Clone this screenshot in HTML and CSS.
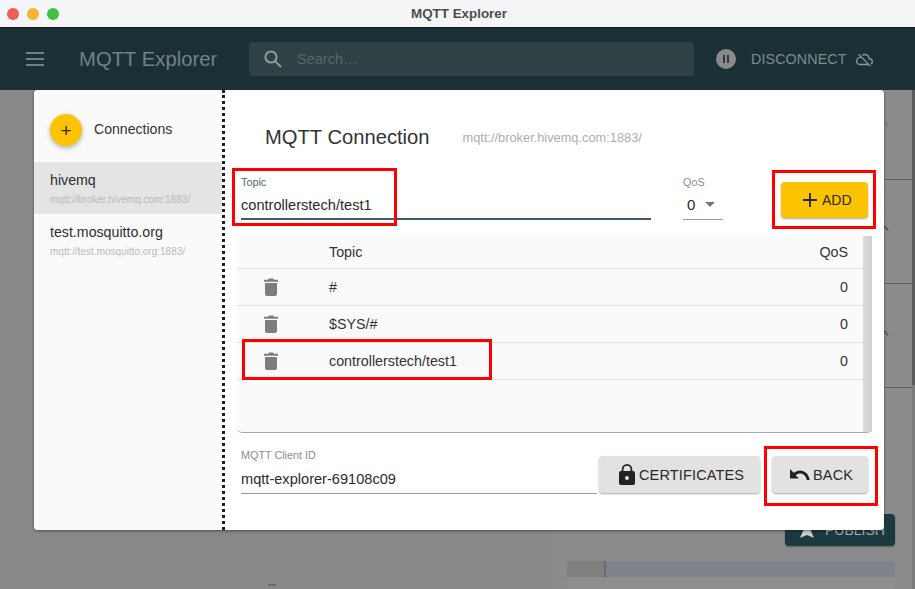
FILE: index.html
```html
<!DOCTYPE html>
<html lang="en">
<head>
<meta charset="utf-8">
<title>MQTT Explorer</title>
<link rel="stylesheet" href="styles.css">
</head>
<body>
<div class="window">
  <header class="titlebar">
    <div class="lights"><span class="light red"></span><span class="light amber"></span><span class="light green"></span></div>
    <div class="window-title">MQTT Explorer</div>
  </header>
  <div class="appbar">
    <svg class="menu-icon" viewBox="0 0 18 14"><path d="M0 1h18M0 7h18M0 13h18"/></svg>
    <div class="app-title">MQTT Explorer</div>
    <div class="search">
      <svg class="search-icon" viewBox="0 0 18 18"><circle cx="7" cy="7" r="5.6"/><path d="M11 11l6 6"/></svg>
      <span class="search-text">Search…</span>
    </div>
    <div class="pause"><i></i><i></i></div>
    <div class="disconnect">DISCONNECT</div>
    <svg class="cloud-icon" viewBox="0 0 24 24"><path d="M19.35 10.04A7.49 7.49 0 0 0 12 4c-1.48 0-2.85.43-4.01 1.17l1.46 1.46A5.47 5.47 0 0 1 12 6a5.5 5.5 0 0 1 5.5 5.5v.5H19a3 3 0 0 1 3 3c0 1.13-.64 2.11-1.56 2.62l1.45 1.45A4.99 4.99 0 0 0 24 15c0-2.64-2.05-4.78-4.65-4.96zM3 5.27l2.75 2.74C2.56 8.15 0 10.77 0 14a6 6 0 0 0 6 6h11.73l2 2L21 20.73 4.27 4 3 5.27zM7.730 10l8 8H6a4 4 0 0 1 0-8h1.730z"/></svg>
  </div>
  <div class="stage">
    <div class="backdrop">
      <div class="tree"><span class="handle">•••</span></div>
      <aside class="sidepanel">
        <div class="rule r1"></div>
        <div class="rule r2"></div>
        <div class="rule r3"></div>
        <div class="tick t1"></div>
        <div class="tick t2"></div>
        <div class="tick t3"></div>
        <button class="publish"><svg class="publish-icon" viewBox="0 0 16 16"><path d="M8 0l7 16-7-3-7 3z"/></svg>PUBLISH</button>
        <div class="history"><span class="history-a"></span><span class="history-b"></span></div>
        <div class="history-foot"></div>
      </aside>
      <div class="edge"></div>
    </div>

    <section class="modal">
      <nav class="sidebar">
        <div class="conn-head">
          <div class="fab">+</div>
          <div class="conn-title">Connections</div>
        </div>
        <div class="conn selected">
          <div class="conn-name">hivemq</div>
          <div class="conn-url">mqtt://broker.hivemq.com:1883/</div>
        </div>
        <div class="conn">
          <div class="conn-name">test.mosquitto.org</div>
          <div class="conn-url">mqtt://test.mosquitto.org:1883/</div>
        </div>
      </nav>
      <main class="main">
        <div class="heading">
          <h1>MQTT Connection</h1>
          <span class="heading-url">mqtt://broker.hivemq.com:1883/</span>
        </div>
        <div class="topic-row">
          <div class="field topic-field">
            <label class="label label-focus">Topic</label>
            <div class="value">controllerstech/test1</div>
          </div>
          <div class="field qos-field">
            <label class="label">QoS</label>
            <div class="value qos-value">0<span class="caret"></span></div>
          </div>
          <button class="btn btn-add">
            <svg class="plus-icon" viewBox="0 0 16 16"><path d="M8 1v14M1 8h14"/></svg>ADD
          </button>
        </div>
        <div class="table-wrap">
          <div class="table">
            <div class="tr th"><span></span><span>Topic</span><span class="num">QoS</span></div>
            <div class="tr">
              <svg class="trash" viewBox="0 0 14 18"><path d="M0 1.8h4L5 .6h4l1 1.2h4v2H0zM1 5h12v11a2 2 0 0 1-2 2H3a2 2 0 0 1-2-2z"/></svg>
              <span>#</span><span class="num">0</span>
            </div>
            <div class="tr">
              <svg class="trash" viewBox="0 0 14 18"><path d="M0 1.8h4L5 .6h4l1 1.2h4v2H0zM1 5h12v11a2 2 0 0 1-2 2H3a2 2 0 0 1-2-2z"/></svg>
              <span>$SYS/#</span><span class="num">0</span>
            </div>
            <div class="tr">
              <svg class="trash" viewBox="0 0 14 18"><path d="M0 1.8h4L5 .6h4l1 1.2h4v2H0zM1 5h12v11a2 2 0 0 1-2 2H3a2 2 0 0 1-2-2z"/></svg>
              <span>controllerstech/test1</span><span class="num">0</span>
            </div>
          </div>
          <div class="scrollbar"></div>
        </div>
        <div class="footer">
          <div class="field client-field">
            <label class="label">MQTT Client ID</label>
            <div class="value">mqtt-explorer-69108c09</div>
          </div>
          <button class="btn btn-cert">
            <svg class="lock-icon" viewBox="0 0 16 21"><path fill-rule="evenodd" d="M8 0a5.3 5.3 0 0 1 5.3 5.3V7H14a2 2 0 0 1 2 2v10a2 2 0 0 1-2 2H2a2 2 0 0 1-2-2V9a2 2 0 0 1 2-2h.7V5.3A5.3 5.3 0 0 1 8 0zm0 1.8a3.5 3.5 0 0 0-3.5 3.5V7h7V5.3A3.5 3.5 0 0 0 8 1.8zM8 12a2 2 0 1 0 0 4 2 2 0 0 0 0-4z"/></svg>CERTIFICATES
          </button>
          <button class="btn btn-back">
            <svg class="undo-icon" viewBox="0 0 20 11"><path d="M0 0v9.5h9L5.6 6.2C7 5 8.600 4.400 10.200 4.400c3 0 5.600 2 6.600 6.600h3C18.600 4.800 14.800 1.400 10.200 1.400 7.800 1.400 5.500 2.300 3.700 3.800z"/></svg>BACK
          </button>
        </div>
      </main>
    </section>

    <div class="mark mark-topic"></div>
    <div class="mark mark-add"></div>
    <div class="mark mark-row"></div>
    <div class="mark mark-back"></div>
  </div>
</div>
</body>
</html>
```

FILE: styles.css
```css
* { box-sizing: border-box; }
html, body { margin: 0; height: 100%; overflow: hidden; }
body { font-family: "Liberation Sans", Arial, sans-serif; color: #2b2b2b; }

.window { width: 915px; height: 589px; display: flex; flex-direction: column; background: #888; }

.titlebar { height: 28px; flex: none; background: #f4f5f6; border-bottom: 1px solid #1a1a1a; display: flex; align-items: center; position: relative; }
.lights { display: flex; gap: 8px; padding-left: 7px; }
.light { width: 12px; height: 12px; border-radius: 50%; }
.red { background: #f25d55; }
.amber { background: #f9b232; }
.green { background: #3ec244; }
.window-title { flex: 1; text-align: center; margin-right: 56px; font-size: 13.400px; font-weight: 700; color: #4d4d4d; }

.appbar { height: 62px; flex: none; background: #1b3036; display: flex; align-items: center; padding-left: 26px; color: #778a8f; }
.menu-icon { width: 18px; height: 14px; stroke: #8d9a9d; stroke-width: 1.600; fill: none; flex: none; }
.app-title { font-size: 20.300px; margin-left: 35px; width: 170px; color: #6f8287; }
.search { width: 445px; height: 34px; background: #2e4145; border-radius: 4px; display: flex; align-items: center; padding-left: 15px; }
.search-icon { width: 18px; height: 18px; stroke: #8f9b9e; stroke-width: 2; fill: none; }
.search-text { margin-left: 15px; font-size: 14.500px; color: #55676b; }
.pause { width: 20px; height: 20px; border-radius: 50%; background: #8a8a8a; margin-left: 22px; display: flex; align-items: center; justify-content: center; gap: 2px; }
.pause i { width: 2px; height: 8px; background: #2c3c40; }
.disconnect { margin-left: 15px; font-size: 14.300px; letter-spacing: .1px; color: #7b8b8f; }
.cloud-icon { width: 17px; height: 17px; margin-left: 9px; fill: #8a9699; }

.stage { flex: 1; position: relative; overflow: hidden; }
.backdrop { height: 100%; display: flex; background: #888; }
.tree { width: 552px; display: flex; align-items: flex-end; padding-left: 268px; }
.handle { font-size: 8px; color: #5e5e5e; line-height: 8px; }
.sidepanel { flex: 1; background: #8b8b8b; display: flex; flex-direction: column; align-items: flex-end; padding: 424px 0 0 15px; position: relative; }
.rule { position: absolute; right: 0; width: 27px; height: 1px; background: #5d5d5d; }
.r1 { top: 89px; }
.r2 { top: 193px; }
.r3 { top: 297px; }
.tick { position: absolute; left: 331px; width: 6px; height: 1.500px; background: #5a5a5a; transform: rotate(45deg); }
.t1 { top: 33px; background: #777; }
.t2 { top: 137px; }
.t3 { top: 242px; }
.publish { width: 110px; height: 32px; margin: 0 17px 0 0; border: 0; border-radius: 4px; background: #1b3a3f; color: #aab; display: flex; align-items: center; padding-left: 14px; gap: 10px; font: 14px "Liberation Sans", Arial, sans-serif; box-shadow: 0 1px 2px rgba(0,0,0,.3); flex: none; }
.publish-icon { width: 16px; height: 16px; fill: #c9cdce; }
.history { width: 328px; height: 16px; margin: 15px 17px 0 0; background: #7f8288; display: flex; flex: none; }
.history-a { width: 37px; background: #7f7f7f; }
.history-b { width: 2px; background: #666a6e; }
.history-foot { width: 328px; height: 12px; margin-right: 17px; background: #8e8e8e; flex: none; }
.edge { width: 3px; background: linear-gradient(#5c5c5c 295px, #7c7c7c 295px); }

.modal { position: absolute; left: 34px; top: 0; width: 850px; height: 440px; display: flex; background: #fff; border-radius: 4px; box-shadow: 0 1px 3px rgba(0,0,0,.45); overflow: hidden; }
.sidebar { width: 188px; background: #fafafa; flex: none; }
.conn-head { height: 72px; display: flex; align-items: center; padding: 8px 0 0 16px; }
.fab { width: 32px; height: 32px; border-radius: 50%; background: #fcc400; box-shadow: 0 2px 5px rgba(0,0,0,.3); display: flex; align-items: center; justify-content: center; font-size: 19px; line-height: 1; color: #3a2a00; }
.conn-title { margin: 0 0 2px 12px; font-size: 14.100px; color: #333; }
.conn { height: 52px; padding: 9px 0 0 16px; }
.selected { background: #e4e4e4; }
.conn-name { font-size: 14.200px; line-height: 18px; color: #2e2e2e; }
.conn-url { margin-top: 4px; font-size: 10px; line-height: 13px; color: #b9b9b9; white-space: nowrap; }

.main { flex: 1; border-left: 3px dotted #1f1f1f; padding: 0 12px 0 12px; display: flex; flex-direction: column; }
.heading { height: 82px; display: flex; align-items: center; padding: 12px 0 0 28px; flex: none; }
h1 { margin: 0; font-size: 20.200px; font-weight: 400; color: #333; }
.heading-url { margin-left: 33px; font-size: 12.800px; color: #aeaeae; }

.topic-row { height: 64px; display: flex; flex: none; padding: 4px 0 0 4px; }
.field { display: flex; flex-direction: column; }
.label { font-size: 10.800px; line-height: 12px; color: #8c8c8c; }
.label-focus { color: #4a6a73; }
.value { font-size: 14.600px; line-height: 20px; margin-top: 7px; color: #2b2b2b; border-bottom: 1px solid #9a9a9a; height: 25px; }
.topic-field { width: 410px; }
.topic-field .value { border-bottom: 2px solid #3f5d66; }
.qos-field { width: 40px; margin-left: 32px; }
.qos-value { display: flex; align-items: flex-start; padding-left: 4px; font-size: 15px; }
.caret { margin: 7px 0 0 10px; width: 0; height: 0; border: 5.500px solid transparent; border-top: 5px solid #777; border-bottom: 0; }
.btn { border: 0; border-radius: 4px; display: flex; align-items: center; font: 14.500px "Liberation Sans", Arial, sans-serif; letter-spacing: .15px; color: #2a2a2a; box-shadow: 0 1px 2px rgba(0,0,0,.35); }
.btn-add { width: 87px; height: 36px; margin: 6px 0 0 58px; padding: 0 0 0 21px; background: #fcc400; font-size: 14px; letter-spacing: 0; }
.plus-icon { width: 16px; height: 16px; stroke: #222; stroke-width: 1.800; margin-right: 4px; }

.table-wrap { height: 197px; flex: none; display: flex; background: #fafafa; border-bottom: 1px solid #aaa; border-radius: 0 0 5px 5px; }
.table { flex: 1; }
.scrollbar { width: 9px; background: linear-gradient(90deg, #dadada, #cfcfcf); }
.tr { height: 37px; display: grid; grid-template-columns: 92px 1fr 60px; align-items: center; border-bottom: 1px solid #e2e2e2; font-size: 14.300px; color: #333; }
.th { height: 33px; font-size: 14.300px; }
.trash { width: 14px; height: 18px; fill: #7d7d7d; margin-left: 27px; }
.num { text-align: right; padding-right: 15px; }

.footer { flex: 1; display: flex; padding: 16px 0 0 4px; }
.client-field { width: 356px; }
.client-field .value { height: 27px; margin-top: 6px; padding-top: 2px; }
.btn-cert { width: 161px; height: 37px; margin: 7px 0 0 2px; padding-left: 20px; background: #e2e2e2; }
.lock-icon { width: 16px; height: 21px; fill: #222; margin-right: 4px; }
.btn-back { width: 96px; height: 37px; margin: 7px 0 0 12px; padding-left: 18px; background: #e2e2e2; }
.undo-icon { width: 20px; height: 11px; fill: #222; margin-right: 3px; }

.mark { position: absolute; border: 3px solid #f00; }
.mark-topic { left: 232px; top: 78px; width: 165px; height: 58px; }
.mark-add { left: 772px; top: 80px; width: 104px; height: 59px; }
.mark-row { left: 242px; top: 249px; width: 250px; height: 41px; }
.mark-back { left: 764px; top: 356px; width: 114px; height: 60px; }
```
